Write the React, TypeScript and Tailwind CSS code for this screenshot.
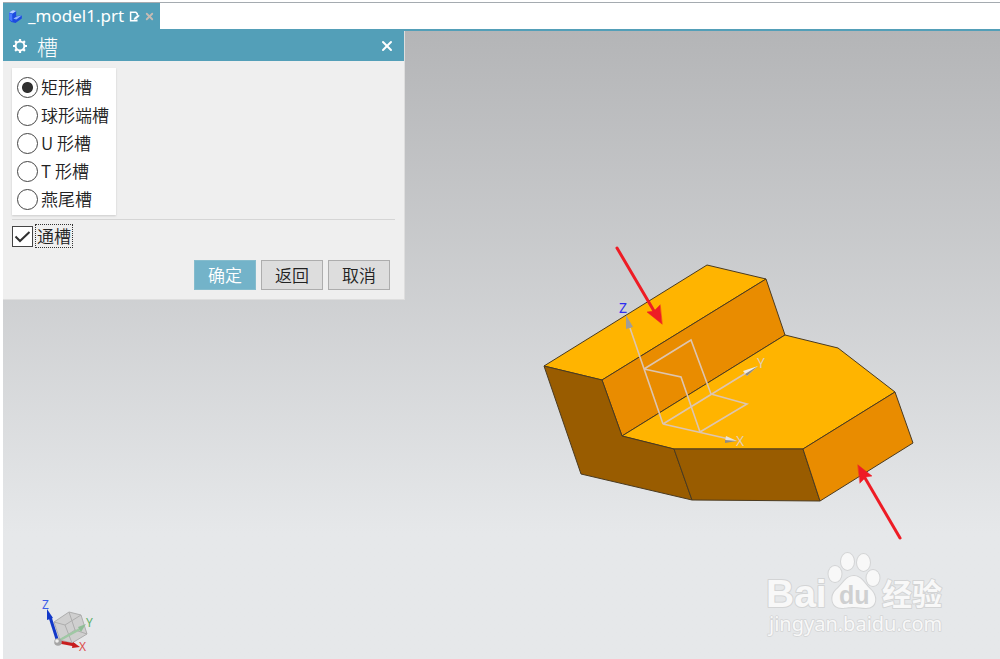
import { useState } from 'react'
import { X } from 'lucide-react'

const SLOT_TYPES = [
  { id: 'rectangular', label: '矩形槽' },
  { id: 'ball-end', label: '球形端槽' },
  { id: 'u-slot', label: 'U 形槽' },
  { id: 't-slot', label: 'T 形槽' },
  { id: 'dovetail', label: '燕尾槽' },
]

const secondaryButton =
  'h-[30px] w-[62px] border border-[#adadad] bg-[#dddddd] text-[#222222] hover:bg-[#e6e6e6]'

function PartIcon() {
  return (
    <svg viewBox="0 0 15 15" className="h-[15px] w-[15px]" aria-hidden="true">
      <path d="M1 3.5 5 1 8.2 2V7L13.8 6.4V9.4L7.5 14 3.4 13 1 10.8Z" fill="#1c4be0" />
      <path d="M1 3.5 5 1 8.2 2 4.6 4.6Z" fill="#b4d0ff" />
      <path d="M5.4 9.8 8.6 7.4 13.6 6.6 8.4 10.4Z" fill="#8db4ff" />
      <path d="M1.2 4 4.2 5 4.4 12.6 1.2 10.4Z" fill="#4a7cff" />
    </svg>
  )
}

function ModifiedIcon() {
  return (
    <svg viewBox="0 0 11 11" className="h-[11px] w-[11px]" fill="none" stroke="white" aria-hidden="true">
      <path d="M8.2 4V2.6L6.8 1.2H1.6V9.8H7.8V8.4" strokeWidth="1.5" />
      <path d="M5.4 7 9.2 3.8 10.4 5 6.6 8.2 5 8.6Z" fill="white" strokeWidth="0.5" />
    </svg>
  )
}

function GearIcon() {
  return (
    <svg viewBox="0 0 16 16" className="h-4 w-4" fill="none" stroke="white" aria-hidden="true">
      <circle cx="8" cy="8" r="4.4" strokeWidth="2" />
      <path
        d="M8 1V3.4M8 12.6V15M1 8H3.4M12.6 8H15M3.1 3.1 4.7 4.7M11.3 11.3 12.9 12.9M3.1 12.9 4.7 11.3M11.3 4.7 12.9 3.1"
        strokeWidth="2.2"
      />
    </svg>
  )
}

function SlotDialog() {
  const [slotType, setSlotType] = useState('rectangular')
  const [through, setThrough] = useState(true)

  return (
    <section
      aria-labelledby="slot-title"
      className="relative z-10 w-[402px] border-r border-b border-[#dedede] bg-[#efefef] font-['Noto_Sans_CJK_SC',sans-serif] text-[17px] font-[350] text-[#222222]"
    >
      <header className="flex h-[30px] items-center bg-[#539fb8] pr-[9px] pl-[9px] text-white">
        <GearIcon />
        <h1 id="slot-title" className="ml-[9px] text-[21px] leading-[30px] font-light">
          槽
        </h1>
        <button type="button" aria-label="关闭" className="ml-auto">
          <X className="h-4 w-4" strokeWidth={3} />
        </button>
      </header>

      <form className="px-[9px] pt-[7px] pb-[9px]" onSubmit={(e) => e.preventDefault()}>
        <fieldset className="w-fit bg-white pt-[5px] pr-[7px] pb-[2px] pl-[5px] shadow-[0_1px_2px_rgba(0,0,0,0.15)]">
          {SLOT_TYPES.map((type) => (
            <label key={type.id} className="flex h-7 items-center gap-[3px] leading-7">
              <input
                type="radio"
                name="slot-type"
                value={type.id}
                checked={slotType === type.id}
                onChange={() => setSlotType(type.id)}
                className="h-[21px] w-[21px] appearance-none rounded-full border border-[#444444] bg-white checked:bg-[radial-gradient(circle,#303030_5px,transparent_6px)]"
              />
              {type.label}
            </label>
          ))}
        </fieldset>

        <hr className="mt-1 border-[#d5d5d5]" />

        <label className="mt-1 flex w-fit items-center gap-[2px]">
          <span className="grid">
            <input
              type="checkbox"
              checked={through}
              onChange={(e) => setThrough(e.target.checked)}
              className="peer col-start-1 row-start-1 h-[21px] w-[21px] appearance-none border border-[#444444] bg-white"
            />
            <svg
              viewBox="0 0 21 21"
              className="pointer-events-none invisible col-start-1 row-start-1 h-[21px] w-[21px] peer-checked:visible"
              aria-hidden="true"
            >
              <path d="M3.5 10.5 8 15 17.5 6" fill="none" stroke="#303030" strokeWidth="2" />
            </svg>
          </span>
          <span className="border border-dotted border-[#333333] px-px leading-[22px]">通槽</span>
        </label>

        <div className="mt-3 flex justify-end gap-[5px] pr-[5px]">
          <button type="submit" className="h-[30px] w-[62px] border border-[#85bccd] bg-[#73b3c9] text-white">
            确定
          </button>
          <button type="button" className={secondaryButton}>返回</button>
          <button type="button" className={secondaryButton}>取消</button>
        </div>
      </form>
    </section>
  )
}

function Model() {
  return (
    <svg
      viewBox="540 240 380 305"
      className="absolute top-[209px] left-[537px] h-[305px] w-[380px]"
      role="img"
      aria-label="零件模型"
    >
      <g stroke="#4a3a20" strokeWidth="1" strokeLinejoin="round">
        <path d="M544 366 707 265 766 279 602 380Z" fill="#ffb400" />
        <path d="M602 380 766 279 785 335 622 436Z" fill="#e98c00" />
        <path d="M622 436 785 335 838 348 895 392 803 449H674Z" fill="#ffb400" />
        <path d="M544 366 602 380 622 436 674 449 692 500 581 474Z" fill="#995c00" />
        <path d="M674 449H803L820 501 692 500Z" fill="#995c00" />
        <path d="M803 449 895 392 913 443 820 501Z" fill="#e98c00" />
      </g>

      {/* datum coordinate system */}
      <g fill="none" stroke="#ddc5b0" strokeWidth="1.6">
        <path d="M663 424 630 328M663 424 746 373M663 424 729 439" />
        <path d="M644 369 691 340 711 394M644 369 681 377 700 432M711 394 747 404 700 432" />
      </g>
      <path d="M626 315 633 327 626 329Z" fill="#a09d98" />
      <path d="M758 366 743 371 747 376Z" fill="#f0ece6" />
      <path d="M758 366 745 374 747 376Z" fill="#8f8a80" />
      <path d="M737 441 726 436 725 442Z" fill="#e6e2dc" />
      <path d="M737 441 725 440 725 443Z" fill="#8f8a80" />
      <g fontSize="14">
        <text x="619" y="313" fill="#2e2ef0">Z</text>
        <text x="757" y="368" fill="#e2cdb8">Y</text>
        <text x="736" y="446" fill="#e2cdb8">X</text>
      </g>

      {/* face callouts */}
      <g stroke="#ee1c25" strokeWidth="3" strokeLinecap="round" fill="#ee1c25">
        <path d="M617 248 654 311" />
        <path d="M900 538 865 478" />
        <path d="M662 324 647 312 654 311 660 305Z" strokeWidth="0.5" />
        <path d="M858 465 872 476 866 477 860 483Z" strokeWidth="0.5" />
      </g>
    </svg>
  )
}

function ViewTriad() {
  return (
    <svg
      viewBox="36 595 60 60"
      className="absolute bottom-1 left-[33px] h-[60px] w-[60px]"
      role="img"
      aria-label="视图方位"
    >
      <g fill="#cfcfcf" stroke="#aeaeae" strokeWidth="1">
        <path d="M54 622 69 612 81 615 87 634 72 643 60 640Z" />
        <path d="M54 622 65 625 81 615M65 625 72 643M69 612 75 630 60 640M75 630 87 634" fill="none" />
      </g>
      <path d="M58 641 80 629" stroke="#9fc8a4" strokeWidth="2.5" />
      <path d="M86 624 78 627 81 632Z" fill="#8fbd96" />
      <path d="M57 639 50 617" stroke="#1238c8" strokeWidth="3" />
      <path d="M47 609 53 618 47 620Z" fill="#1238c8" />
      <path d="M59 642 75 645" stroke="#c81e1e" strokeWidth="3" />
      <path d="M80 647 73 642 72 648Z" fill="#c81e1e" />
      <circle cx="58" cy="642" r="3.8" fill="#a5a5a5" />
      <circle cx="57" cy="641" r="1.8" fill="#efefef" />
      <g fontSize="12">
        <text x="42" y="609" fill="#3c5ce8">Z</text>
        <text x="86" y="627" fill="#5caf67">Y</text>
        <text x="79" y="651" fill="#dc4e4e">X</text>
      </g>
    </svg>
  )
}

function Watermark() {
  return (
    <svg
      viewBox="760 545 200 95"
      className="absolute right-10 bottom-[19px] h-[95px] w-[200px]"
      role="img"
      aria-label="Baidu 经验"
    >
      <g
        fill="#f8f8f8"
        stroke="#d3d4d5"
        strokeWidth="2"
        strokeLinejoin="round"
        paintOrder="stroke"
      >
        <text x="766" y="607" fontSize="39" fontWeight="700" className="font-['Liberation_Sans',sans-serif]">
          Bai
        </text>
        <ellipse cx="835" cy="574" rx="6.5" ry="8" />
        <ellipse cx="847.5" cy="561.5" rx="6.5" ry="8.5" />
        <ellipse cx="863.5" cy="562.5" rx="6.5" ry="8.5" />
        <ellipse cx="873" cy="578" rx="6.5" ry="8" />
        <path d="M854 576C861 576 864 583 870 589C878 596 877 608 866 608C861 608 859 607 854 607C848 607 846 608 842 608C831 608 830 596 836 590C843 584 846 576 854 576Z" />
        <text x="882" y="605" fontSize="30" fontWeight="700" className="font-['Noto_Sans_CJK_SC',sans-serif]">
          经验
        </text>
        <text x="769" y="631" fontSize="20" strokeWidth="1.5">jingyan.baidu.com</text>
      </g>
      <text
        x="839"
        y="604"
        fontSize="25"
        fontWeight="700"
        fill="#cfd0d1"
        className="font-['Liberation_Sans',sans-serif]"
      >
        du
      </text>
    </svg>
  )
}

export default function App() {
  return (
    <div className="flex min-h-screen flex-col bg-white pl-[3px] font-['Noto_Sans','Noto_Sans_CJK_SC',sans-serif]">
      <div className="mt-[2px] flex h-[27px] border-t border-[#a5abb0]">
        <div className="flex items-center bg-[#539fb8] pr-[5px] pl-[5px] text-white">
          <PartIcon />
          <span className="ml-[5px] text-[17px] leading-[26px]">_model1.prt</span>
          <span className="ml-[5px]">
            <ModifiedIcon />
          </span>
          <button type="button" aria-label="关闭 _model1.prt" className="ml-1 text-[#c6bbb4]">
            <X className="h-[11px] w-[11px]" strokeWidth={4} />
          </button>
        </div>
      </div>

      <main className="relative flex-1 border-t-2 border-[#539fb8] bg-linear-to-b from-[#b4b5b7] to-[#e6e8ea] to-80%">
        <Model />
        <ViewTriad />
        <Watermark />
        <SlotDialog />
      </main>
    </div>
  )
}
